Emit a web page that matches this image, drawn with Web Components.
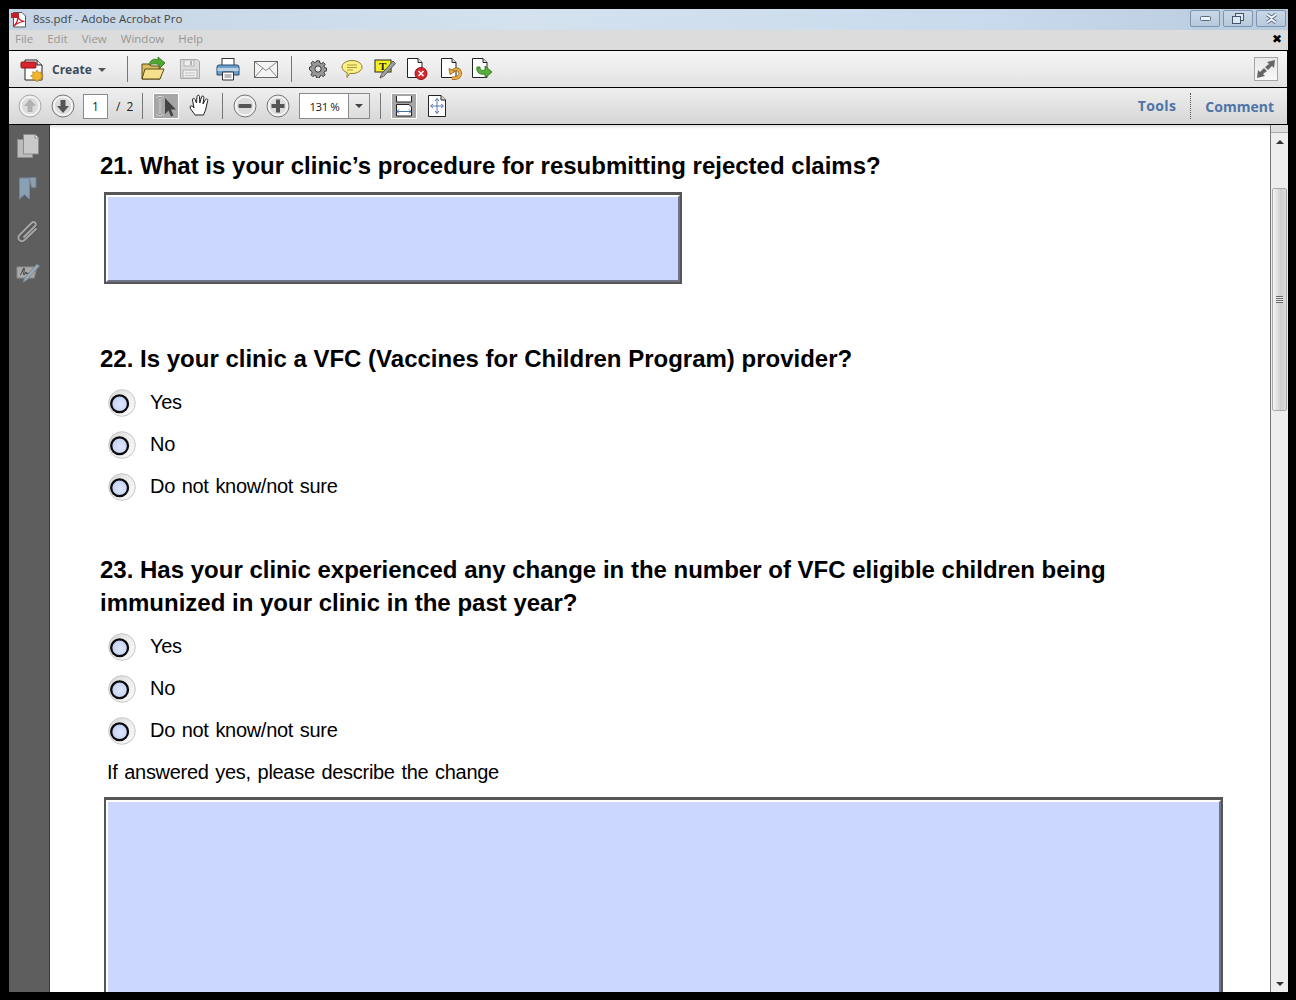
<!DOCTYPE html>
<html>
<head>
<meta charset="utf-8">
<title>8ss.pdf - Adobe Acrobat Pro</title>
<style>
html, body { margin: 0; height: 100%; background: #000; overflow: hidden; }
body { padding: 9px 8px 8px 9px; box-sizing: border-box; height: 1000px; font-family: "Open Sans", "Liberation Sans", sans-serif; }
acro-window { height: 983px; }
</style>
</head>
<body>
<acro-window>
  <title-bar>8ss.pdf - Adobe Acrobat Pro</title-bar>
  <menu-bar></menu-bar>
  <main-toolbar></main-toolbar>
  <nav-toolbar></nav-toolbar>
  <doc-area>
    <form-question style="--top:24px">21. What is your clinic’s procedure for resubmitting rejected claims?</form-question>
    <fill-box style="--w:578px;--h:92px;--mt:10px;--mb:58px"></fill-box>
    <form-question>22. Is your clinic a VFC (Vaccines for Children Program) provider?</form-question>
    <radio-option style="--mt:7px">Yes</radio-option>
    <radio-option>No</radio-option>
    <radio-option>Do not know/not sure</radio-option>
    <form-question style="--top:45px">23. Has your clinic experienced any change in the number of VFC eligible children being immunized in your clinic in the past year?</form-question>
    <radio-option style="--mt:7px">Yes</radio-option>
    <radio-option>No</radio-option>
    <radio-option>Do not know/not sure</radio-option>
    <form-note>If answered yes, please describe the change</form-note>
    <fill-box style="--w:1119px;--h:260px;--mt:13px;--mb:0px"></fill-box>
  </doc-area>
</acro-window>

<script>
const icons = {
  create: `<svg width="26" height="26" viewBox="0 0 26 26"><path d="M5 3h12l5 5v15H5z" fill="#fff" stroke="#222"/><path d="M17 3v5h5" fill="#ddd" stroke="#222"/><rect x="1" y="5" width="15" height="6" rx="1" fill="#d8262c" stroke="#8a1518"/><path d="M17 13l1.600 2.400 2.700-.6-.3 2.800 2.400 1.400-2.400 1.400.3 2.800-2.700-.6L17 25l-1.600-2.400-2.700.6.3-2.800-2.400-1.400 2.400-1.400-.3-2.800 2.700.6z" fill="#f0b52c" stroke="#a87a14" stroke-width=".6"/></svg>`,
  open: `<svg width="26" height="26" viewBox="0 0 26 26"><path d="M2 8h7l2 2h9v13H2z" fill="#d9bd62" stroke="#5c4a14"/><path d="M2 23l3-10h19l-4 10z" fill="#f5e08e" stroke="#5c4a14"/><path d="M9 9c1-5 5-7 9-5V1l7 6-6 6v-4c-3-2-7-1-10 0z" fill="#4ea72e" stroke="#2d6d1a" stroke-width=".8"/></svg>`,
  save: `<svg width="22" height="24" viewBox="0 0 22 24"><path d="M1.500 2.500h17l2 2v17h-19z" fill="#dcdcdc" stroke="#a9a9a9"/><rect x="5" y="3" width="10" height="6" fill="#eee" stroke="#b0b0b0"/><rect x="11" y="4" width="2" height="4" fill="#b0b0b0"/><rect x="4" y="13" width="14" height="8" fill="#eee" stroke="#b0b0b0"/><path d="M6 16h10M6 18.500h10" stroke="#c4c4c4"/></svg>`,
  print: `<svg width="24" height="24" viewBox="0 0 24 24"><rect x="6" y="1.500" width="12" height="8" fill="#fff" stroke="#333"/><path d="M3 8h18a2 2 0 0 1 2 2v8H1v-8a2 2 0 0 1 2-2z" fill="#6f9fc8" stroke="#274f72"/><rect x="1.500" y="11" width="21" height="3" fill="#b9d2e6"/><path d="M6.500 15h11v8h-11z" fill="#fff" stroke="#333"/><path d="M8.500 18h7M8.500 20h7" stroke="#777"/></svg>`,
  mail: `<svg width="24" height="17" viewBox="0 0 24 17"><rect x=".5" y=".5" width="23" height="16" fill="#f4f4f4" stroke="#666"/><path d="M1 1l11 8.500L23 1M1 16l8-9M23 16l-8-9" fill="none" stroke="#888"/></svg>`,
  gear: `<svg width="18" height="18" viewBox="0 0 18 18"><path d="M7.500 1h3l.4 2.200 1.700.7 1.900-1.300 2 2-1.300 1.900.7 1.700 2.100.4v3l-2.100.4-.7 1.700 1.300 1.900-2 2-1.900-1.300-1.700.7-.4 2.100h-3l-.4-2.100-1.700-.7-1.900 1.300-2-2 1.300-1.900-.7-1.700L0 10.500v-3l2.100-.4.700-1.700L1.500 3.500l2-2 1.900 1.300 1.700-.7z" transform="translate(.5 -.1) scale(.95)" fill="#9a9a9a" stroke="#333"/><circle cx="9" cy="9" r="3.200" fill="#e8e8e8" stroke="#333"/></svg>`,
  comment: `<svg width="22" height="20" viewBox="0 0 22 20"><path d="M11 1.500c5.500 0 10 2.800 10 6.500s-4.500 6.500-10 6.500c-.8 0-1.500 0-2.200-.2L6 18.500l.2-4.900C3 12.500 1 10.400 1 8c0-3.700 4.500-6.500 10-6.500z" fill="#fdf08a" stroke="#8a7d2c"/><path d="M6 6h10M6 8.500h10M6 11h6" stroke="#a89a30"/></svg>`,
  note: `<svg width="22" height="22" viewBox="0 0 22 22"><rect x="1" y="2" width="16" height="12" fill="#f7f01e" stroke="#222"/><text x="5" y="12" font-family="Liberation Serif" font-weight="bold" font-size="11" fill="#222">T</text><path d="M19 3l2.500 2.500L10 18l-4 2 1.500-4z" fill="#9aa0a8" stroke="#444" stroke-width=".8"/><path d="M7.500 16l2.500 2" stroke="#e0a050"/></svg>`,
  reject: `<svg width="22" height="24" viewBox="0 0 22 24"><path d="M1.500 1.500H12l4 4v15H1.500z" fill="#fff" stroke="#222"/><path d="M12 1.500v4h4" fill="#ddd" stroke="#222"/><circle cx="15" cy="16.500" r="6" fill="#d8262c" stroke="#8a1518"/><path d="M12.500 14l5 5M17.500 14l-5 5" stroke="#fff" stroke-width="1.600"/></svg>`,
  redo: `<svg width="22" height="24" viewBox="0 0 22 24"><path d="M1.500 1.500H12l4 4v15H1.500z" fill="#fff" stroke="#222"/><path d="M12 1.500v4h4" fill="#ddd" stroke="#222"/><path d="M12 21c6 1 9-2 8-6-1-3-5-4-7-1" fill="none" stroke="#8c6014" stroke-width="3.400"/><path d="M12 21c6 1 9-2 8-6-1-3-5-4-7-1" fill="none" stroke="#eeaf42" stroke-width="2"/><path d="M9 11.500l1 6 5-3z" fill="#eeaf42" stroke="#8c6014" stroke-width=".8"/></svg>`,
  send: `<svg width="22" height="24" viewBox="0 0 22 24"><path d="M1.500 1.500H12l4 4v15H1.500z" fill="#fff" stroke="#222"/><path d="M12 1.500v4h4" fill="#ddd" stroke="#222"/><path d="M6 10c-1 5 2 8 8 7v4l7-6-7-6v4c-3 1-5 0-5-3z" fill="#58ad3c" stroke="#2d6d1a" stroke-width=".8"/></svg>`,
  expand: `<svg width="24" height="24" viewBox="0 0 24 24"><defs><linearGradient id="ex" x1="0" y1="0" x2="0" y2="1"><stop offset="0" stop-color="#e8e8e8"/><stop offset="1" stop-color="#f8f8f8"/></linearGradient></defs><rect x=".5" y=".5" width="23" height="23" fill="url(#ex)" stroke="#a5a5a5"/><path d="M13 5L21 3L20 11L18 9L14 13L11 10L15 7zM11 19L3 21L4 13L6 15L10 11L13 14L9 17z" fill="#666"/></svg>`,
  up: `<svg width="24" height="24" viewBox="0 0 24 24"><circle cx="12" cy="12" r="11" fill="#e9e9e9" stroke="#a9a9a9"/><circle cx="12" cy="12" r="9" fill="#dcdcdc" stroke="#fff"/><path d="M12 5l6 7h-3.500v6h-5v-6H6z" fill="#b0b0b0"/></svg>`,
  down: `<svg width="24" height="24" viewBox="0 0 24 24"><circle cx="12" cy="12" r="11" fill="#e9e9e9" stroke="#777"/><circle cx="12" cy="12" r="9" fill="#dcdcdc" stroke="#fff"/><path d="M12 19l-6-7h3.500V6h5v6H18z" fill="#555"/></svg>`,
  select: `<svg width="26" height="26" viewBox="0 0 26 26"><rect x=".5" y=".5" width="25" height="25" fill="#a6a6a6" stroke="#fff"/><path d="M3 4h3l1 1 1-1h3M3 22h3l1-1 1 1h3M7 5v16" stroke="#f0f0f0" stroke-width="2.200" fill="none"/><path d="M3 4h3l1 1 1-1h3M3 22h3l1-1 1 1h3M7 5v16" stroke="#666" stroke-width=".8" fill="none"/><path d="M12 5l11 11.500h-5l2.500 6-2.500 1-2.500-6L12 21z" fill="#444"/></svg>`,
  hand: `<svg width="22" height="24" viewBox="0 0 22 24"><path d="M6 21c-1-2-5-6-5-8 0-1.500 2-1.500 3-.5l1 1.500-1.500-8c-.2-2 2-2.200 2.500-.5L7.500 9 8 2.500c.2-1.800 2.500-1.800 2.500 0l.3 6.500L12.500 3c.5-1.700 2.600-1.200 2.400.5L14 10l2.500-4.500c.8-1.400 2.600-.6 2.200 1L17 14c-.5 3-2 5-2.500 7z" fill="#fff" stroke="#222" stroke-linejoin="round"/></svg>`,
  minus: `<svg width="24" height="24" viewBox="0 0 24 24"><circle cx="12" cy="12" r="11" fill="#e9e9e9" stroke="#777"/><circle cx="12" cy="12" r="9" fill="#dcdcdc" stroke="#fff"/><rect x="5.500" y="10" width="13" height="4" rx="1" fill="#555"/></svg>`,
  plus: `<svg width="24" height="24" viewBox="0 0 24 24"><circle cx="12" cy="12" r="11" fill="#e9e9e9" stroke="#777"/><circle cx="12" cy="12" r="9" fill="#dcdcdc" stroke="#fff"/><path d="M10 5.500h4V10h4.500v4H14v4.500h-4V14H5.500v-4H10z" fill="#555"/></svg>`,
  fitwidth: `<svg width="26" height="26" viewBox="0 0 26 26"><rect x=".5" y=".5" width="25" height="25" fill="#a6a6a6" stroke="#fff"/><path d="M5.500 3v6h15V3" fill="#fff" stroke="#222"/><path d="M5.500 11.500H18l2.500 2.500v9h-15z" fill="#fff" stroke="#222"/><path d="M6 18.500h14M8 16.500l-2 2 2 2M18 16.500l2 2-2 2" fill="none" stroke="#4b6db0"/></svg>`,
  fitpage: `<svg width="18" height="22" viewBox="0 0 18 22"><path d="M.5.500H13l4.500 4.500v16.500H.5z" fill="#fff" stroke="#222"/><path d="M13 .5V5h4.500" fill="#ddd" stroke="#222"/><path d="M9 3.500v15M3 11h12M7 6l2-2.500L11 6M7 16l2 2.500 2-2.500M5 9l-2.500 2L5 13M13 9l2.500 2-2.500 2" fill="none" stroke="#5b79b8"/></svg>`,
  pages: `<svg width="22" height="24" viewBox="0 0 22 24"><rect x=".5" y="5.500" width="15" height="18" fill="#bcbcbc" stroke="#8c8c8c"/><path d="M6.500.5H18l3.500 3.500v16h-15z" fill="#c9c9c9" stroke="#8c8c8c"/><path d="M18 .5V4h3.500" fill="#ededed" stroke="#8c8c8c"/></svg>`,
  bookmark: `<svg width="18" height="23" viewBox="0 0 18 23"><path d="M10 .5h7v10h-4.500z" fill="#8d9eac" stroke="#6f7f8c"/><path d="M.5 1h10v21L5.500 17.500.5 22z" fill="#8aa0b4" stroke="#71879c"/></svg>`,
  clip: `<svg width="24" height="24" viewBox="0 0 24 24"><path d="M8 17L19 6c2.500-2.500-1-5.500-3.500-3L3.500 15c-3.500 3.500 1.500 8.500 5 5L20 9" fill="none" stroke="#2f2f2f" stroke-width="3.400" stroke-linecap="round" opacity=".25"/><path d="M8 17L19 6c2.500-2.500-1-5.500-3.500-3L3.500 15c-3.500 3.500 1.500 8.500 5 5L20 9" fill="none" stroke="#a6a6a6" stroke-width="2" stroke-linecap="round"/></svg>`,
  sign: `<svg width="24" height="20" viewBox="0 0 24 20"><path d="M1 4h20l-3 11H1z" fill="#a8a8a8" stroke="#8c8c8c"/><path d="M4 12c2-1 3-7 4-7s-1 7 0 7 1-3 2-3 0 2 1 2 1-1 2-1" fill="none" stroke="#333"/><path d="M21 1l2.500 2L11 17l-4 2.500L8.500 15z" fill="#9aa8b6" stroke="#6d8196" stroke-width=".8"/></svg>`
};

// small helper so each element doesn't repeat the attachShadow lines
class Base extends HTMLElement {
  constructor(html) {
    super();
    this.attachShadow({ mode: 'open' }).innerHTML = html;
  }
}

customElements.define('acro-window', class extends Base {
  constructor() {
    super(`<style>
      :host { display: flex; flex-direction: column; width: 1279px; background: #000; overflow: hidden; }
    </style><slot></slot>`);
  }
});

customElements.define('title-bar', class extends Base {
  constructor() {
    super(`<style>
      :host { display: flex; align-items: center; height: 21px; flex: none; padding-left: 2px; padding-right: 2px; box-sizing: border-box;
        background: linear-gradient(90deg, #c4d4e4, #d4e2ef 40%, #c9dbec 75%, #b8cbdd); color: #444; font: 11.500px "Open Sans", sans-serif; }
      svg.logo { margin-right: 6px; }
      .t { flex: 1; position: relative; top: -1px; }
      .btns { display: flex; gap: 3px; align-self: flex-start; margin-top: 1px; }
      .b { width: 28px; height: 15px; border: 1px solid #7f93ad; border-radius: 2px; display: flex; align-items: center; justify-content: center;
        background: linear-gradient(#c9d8e8, #b7c9dc); }
    </style>
    <svg class="logo" width="16" height="17" viewBox="0 0 16 17"><path d="M2.500 1.500H11l3.500 3.500v11h-12z" fill="#fff" stroke="#555"/><rect x="0" y="2" width="8" height="5" fill="#c21f26"/><path d="M3 15c3-3 4-7 3.500-10 1 3 3 5 7 5.500-4 .2-7 1.500-10.500 4.500z" fill="none" stroke="#c21f26" stroke-width="1.200"/></svg>
    <span class="t"><slot></slot></span>
    <div class="btns">
      <div class="b"><svg width="11" height="6" viewBox="0 0 11 6"><rect x=".5" y=".5" width="10" height="4" rx="1" fill="#eef3f8" stroke="#5a6a80"/></svg></div>
      <div class="b"><svg width="12" height="11" viewBox="0 0 12 11"><rect x="3.500" y=".5" width="8" height="7" fill="#dfe8f1" stroke="#44546a"/><rect x=".5" y="3.500" width="8" height="7" fill="#dfe8f1" stroke="#44546a"/></svg></div>
      <div class="b"><svg width="13" height="11" viewBox="0 0 13 11"><path d="M2 1.500l4.500 3 4.500-3M2 9.500l4.500-3 4.500 3" fill="none" stroke="#56667c" stroke-width="3.600"/><path d="M2 1.500l4.500 3 4.500-3M2 9.500l4.500-3 4.500 3" fill="none" stroke="#f2f6fa" stroke-width="2"/></svg></div>
    </div>`);
  }
});

customElements.define('menu-bar', class extends Base {
  constructor() {
    super(`<style>
      :host { display: flex; align-items: center; height: 20px; flex: none; padding: 0 6px 3px; gap: 14px; background: #dcdcdc; color: #979797;
        font: 11.500px "Open Sans", sans-serif; box-sizing: border-box; }
      .x { margin-left: auto; color: #000; font: bold 12px "DejaVu Sans", sans-serif; }
    </style>
    <span>File</span><span>Edit</span><span>View</span><span>Window</span><span>Help</span><span class="x">✖</span>`);
  }
});

customElements.define('main-toolbar', class extends Base {
  constructor() {
    super(`<style>
      :host { display: flex; align-items: center; height: 36px; flex: none; margin-top: 1px; margin-right: 1px; padding-left: 11px;
        background: linear-gradient(#f6f6f6, #e2e2e2); box-sizing: border-box; }
      .create { display: flex; align-items: center; font: bold 12px "Open Sans", sans-serif; color: #3d4a5c; margin-right: 21px; padding-top: 1px; }
      .create svg:first-child { margin-right: 6px; }
      .caret { margin-left: 6px; border: 4px solid transparent; border-top-color: #555; border-bottom: 0; }
      .sep { width: 1px; height: 26px; background: #777; flex: none; }
      .i { display: flex; align-items: center; justify-content: center; flex: none; }
      .end { margin-left: auto; margin-right: 9px; }
    </style>
    <span class="create"><span class="i">${icons.create}</span>Create<span class="caret"></span></span>
    <span class="sep"></span>
    <span class="i" style="margin-left:12px">${icons.open}</span>
    <span class="i" style="margin-left:13px">${icons.save}</span>
    <span class="i" style="margin-left:15px">${icons.print}</span>
    <span class="i" style="margin-left:14px">${icons.mail}</span>
    <span class="sep" style="margin-left:13px"></span>
    <span class="i" style="margin-left:17px">${icons.gear}</span>
    <span class="i" style="margin-left:14px">${icons.comment}</span>
    <span class="i" style="margin-left:11px">${icons.note}</span>
    <span class="i" style="margin-left:10px">${icons.reject}</span>
    <span class="i" style="margin-left:12px">${icons.redo}</span>
    <span class="i" style="margin-left:9px">${icons.send}</span>
    <span class="i end">${icons.expand}</span>`);
  }
});

customElements.define('nav-toolbar', class extends Base {
  constructor() {
    super(`<style>
      :host { display: flex; align-items: center; height: 36px; flex: none; margin-top: 1px; margin-right: 1px; padding-left: 9px; margin-bottom: 1px;
        background: linear-gradient(#efefef, #d6d6d6); box-sizing: border-box; font: 12px "Open Sans", sans-serif; color: #222; }
      .i { display: flex; align-items: center; justify-content: center; flex: none; }
      .sep { width: 1px; height: 26px; background: #777; flex: none; }
      .page { width: 25px; height: 25px; background: #fff; border: 1px solid #8a8a8a; box-sizing: border-box; display: flex; align-items: center; justify-content: center; }
      .zoom { display: flex; width: 71px; height: 26px; border: 1px solid #8a8a8a; box-sizing: border-box; background: #fff; }
      .zoom span { width: 48px; display: flex; align-items: center; justify-content: center; font-size: 11.500px; letter-spacing: -.5px; }
      .zoom b { flex: 1; border-left: 1px solid #8a8a8a; background: linear-gradient(#efefef, #dcdcdc); display: flex; align-items: center; justify-content: center; }
      .zoom i { border: 4px solid transparent; border-top-color: #444; border-bottom: 0; }
      .right { margin-left: auto; display: flex; align-items: center; font: bold 14px "Open Sans", sans-serif; color: #4d75a6; height: 100%; }
      .right .tools { padding-right: 14px; border-right: 1px dotted #555; height: 26px; line-height: 26px; letter-spacing: .4px; }
      .right .cmt { padding: 0 13px 0 14px; }
    </style>
    <span class="i">${icons.up}</span>
    <span class="i" style="margin-left:9px">${icons.down}</span>
    <span class="page" style="margin-left:8px">1</span>
    <span style="margin-left:8px;word-spacing:3px">/ 2</span>
    <span class="sep" style="margin-left:9px"></span>
    <span class="i" style="margin-left:10px">${icons.select}</span>
    <span class="i" style="margin-left:10px">${icons.hand}</span>
    <span class="sep" style="margin-left:11px"></span>
    <span class="i" style="margin-left:10px">${icons.minus}</span>
    <span class="i" style="margin-left:9px">${icons.plus}</span>
    <span class="zoom" style="margin-left:9px"><span>131 %</span><b><i></i></b></span>
    <span class="sep" style="margin-left:10px"></span>
    <span class="i" style="margin-left:10px">${icons.fitwidth}</span>
    <span class="i" style="margin-left:11px">${icons.fitpage}</span>
    <span class="right"><span class="tools">Tools</span><span class="cmt">Comment</span></span>`);
  }
});

customElements.define('doc-area', class extends Base {
  constructor() {
    super(`<style>
      :host { display: flex; flex: 1; min-height: 0; background: #000; overflow: hidden; }
      .rail { width: 41px; flex: none; background: #5e5e5e; display: flex; flex-direction: column; align-items: center; padding: 9px 2px 0 0; box-sizing: border-box; border-right: 1px solid #3a3a3a; }
      .rail span { height: 43px; display: flex; justify-content: center; align-items: flex-start; flex: none; }
      .page { flex: 1; min-width: 0; background: #fff; padding-left: 50px; overflow: hidden; box-shadow: inset 0 4px 3px -2px #ddd; }
      .bar { width: 17px; flex: none; border-left: 1px solid #777; background: #eee; display: flex; flex-direction: column; position: relative; }
      .bar .tick { height: 7px; border-bottom: 1px solid #aaa; background: #ddd; }
      .bar .btn { height: 17px; display: flex; align-items: center; justify-content: center; }
      .bar .up { border: 4px solid transparent; border-bottom-color: #333; border-top: 0; }
      .bar .dn { border: 4px solid transparent; border-top-color: #333; border-bottom: 0; }
      .thumb { height: 223px; margin: 38px 1px 0 1px; border: 1px solid #aaa; border-radius: 2px; box-sizing: border-box; background: linear-gradient(90deg, #f4f4f4, #cfcfd2 60%, #dcdcdc);
        display: flex; align-items: center; justify-content: center; }
      .grip { width: 7px; height: 7px; background: repeating-linear-gradient(#666 0 1px, #eee 1px 2px); }
      .space { flex: 1; }
    </style>
    <div class="rail"><span>${icons.pages}</span><span>${icons.bookmark}</span><span>${icons.clip}</span><span>${icons.sign}</span></div>
    <div class="page"><slot></slot></div>
    <div class="bar"><div class="tick"></div><div class="btn"><i class="up"></i></div><div class="thumb"><div class="grip"></div></div><div class="space"></div><div class="btn"><i class="dn"></i></div></div>`);
  }
});

customElements.define('form-question', class extends Base {
  constructor() {
    super(`<style>
      :host { display: block; margin-top: var(--top, 0); font: bold 24px/33px "Liberation Sans", sans-serif; color: #000; width: 1060px; }
    </style><slot></slot>`);
  }
});

customElements.define('fill-box', class extends Base {
  constructor() {
    super(`<style>
      :host { display: block; width: var(--w); height: var(--h); margin: var(--mt) 0 var(--mb) 4px; box-sizing: border-box;
        border: 2px solid #565656; border-top-width: 3px; background: #ccd7ff; }
      div { height: 100%; box-sizing: border-box; border: 2px solid #fff; border-right-color: #6f7488; border-bottom-color: #6f7488; }
    </style><div></div>`);
  }
});

let radioId = 0;
customElements.define('radio-option', class extends Base {
  constructor() {
    const id = 'rg' + radioId++;
    super(`<style>
      :host { display: flex; align-items: center; height: 42px; margin-top: var(--mt, 0); margin-left: 8px; font: 20px "Liberation Sans", sans-serif; color: #000; letter-spacing: -.3px; word-spacing: 1.500px; }
      svg { flex: none; margin-right: 14px; }
      span { position: relative; top: -1px; }
    </style>
    <svg width="28" height="28" viewBox="0 0 28 28">
      <defs>
        <linearGradient id="${id}" x1="0" y1="0" x2="1" y2="1"><stop offset="0" stop-color="#d4d4d4"/><stop offset=".45" stop-color="#ededed"/><stop offset="1" stop-color="#fafafa"/></linearGradient>
        <radialGradient id="${id}b" cx=".55" cy=".55" r=".55"><stop offset="0" stop-color="#dfe6fc"/><stop offset="1" stop-color="#c2cff5"/></radialGradient>
      </defs>
      <circle cx="14" cy="14" r="13.300" fill="url(#${id})" stroke="#c6c6c6"/>
      <circle cx="11.600" cy="14.800" r="8.400" fill="url(#${id}b)" stroke="#0a0a0a" stroke-width="2.300"/>
    </svg><span><slot></slot></span>`);
  }
});

customElements.define('form-note', class extends Base {
  constructor() {
    super(`<style>
      :host { display: block; margin: 8px 0 0 7px; font: 20px/24px "Liberation Sans", sans-serif; color: #000; letter-spacing: -.3px; word-spacing: 1.500px; }
    </style><slot></slot>`);
  }
});
</script>
</body>
</html>
